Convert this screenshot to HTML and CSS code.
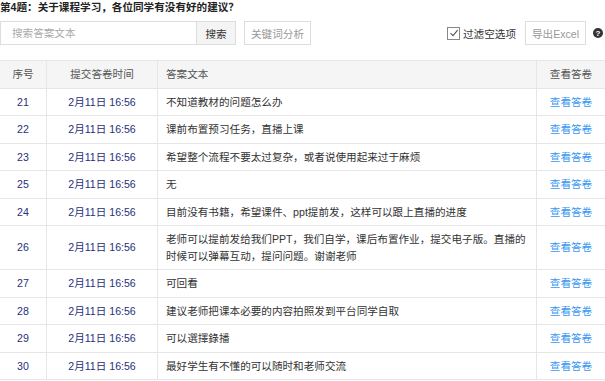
FILE: index.html
```html
<!DOCTYPE html>
<html lang="zh-CN">
<head>
  <meta charset="UTF-8">
  <meta name="viewport" content="width=device-width, initial-scale=1.0">
  <title>答案文本</title>
  <link rel="stylesheet" href="styles.css">
</head>
<body>
  <h1 class="question">第4题：关于课程学习，各位同学有没有好的建议？</h1>

  <div class="toolbar">
    <div class="search">
      <input type="text" class="search-input" placeholder="搜索答案文本">
      <button class="search-button">搜索</button>
    </div>
    <button class="plain-button keyword-button">关键词分析</button>

    <label class="filter">
      <span class="checkbox">
        <svg width="10" height="10" viewBox="0 0 10 10"><path d="M1.5 5.2 L4 7.6 L8.6 2.2" fill="none" stroke="#555" stroke-width="1.1"/></svg>
      </span>
      过滤空选项
    </label>
    <button class="plain-button export-button">导出Excel</button>
    <span class="help">?</span>
  </div>

  <table class="answers">
    <thead>
      <tr>
        <th class="col-no">序号</th>
        <th class="col-time">提交答卷时间</th>
        <th class="col-text">答案文本</th>
        <th class="col-link">查看答卷</th>
      </tr>
    </thead>
    <tbody>
      <tr><td class="col-no">21</td><td class="col-time">2月11日 16:56</td><td class="col-text">不知道教材的问题怎么办</td><td class="col-link"><a href="#">查看答卷</a></td></tr>
      <tr><td class="col-no">22</td><td class="col-time">2月11日 16:56</td><td class="col-text">课前布置预习任务，直播上课</td><td class="col-link"><a href="#">查看答卷</a></td></tr>
      <tr><td class="col-no">23</td><td class="col-time">2月11日 16:56</td><td class="col-text">希望整个流程不要太过复杂，或者说使用起来过于麻烦</td><td class="col-link"><a href="#">查看答卷</a></td></tr>
      <tr><td class="col-no">25</td><td class="col-time">2月11日 16:56</td><td class="col-text">无</td><td class="col-link"><a href="#">查看答卷</a></td></tr>
      <tr><td class="col-no">24</td><td class="col-time">2月11日 16:56</td><td class="col-text">目前没有书籍，希望课件、ppt提前发，这样可以跟上直播的进度</td><td class="col-link"><a href="#">查看答卷</a></td></tr>
      <tr><td class="col-no">26</td><td class="col-time">2月11日 16:56</td><td class="col-text">老师可以提前发给我们PPT，我们自学，课后布置作业，提交电子版。直播的<br>时候可以弹幕互动，提问问题。谢谢老师</td><td class="col-link"><a href="#">查看答卷</a></td></tr>
      <tr><td class="col-no">27</td><td class="col-time">2月11日 16:56</td><td class="col-text">可回看</td><td class="col-link"><a href="#">查看答卷</a></td></tr>
      <tr><td class="col-no">28</td><td class="col-time">2月11日 16:56</td><td class="col-text">建议老师把课本必要的内容拍照发到平台同学自取</td><td class="col-link"><a href="#">查看答卷</a></td></tr>
      <tr><td class="col-no">29</td><td class="col-time">2月11日 16:56</td><td class="col-text">可以選擇錄播</td><td class="col-link"><a href="#">查看答卷</a></td></tr>
      <tr><td class="col-no">30</td><td class="col-time">2月11日 16:56</td><td class="col-text">最好学生有不懂的可以随时和老师交流</td><td class="col-link"><a href="#">查看答卷</a></td></tr>
    </tbody>
  </table>
</body>
</html>
```

FILE: styles.css
```css
body {
  margin: 0;
  font-family: "Liberation Sans", "Noto Sans CJK SC", sans-serif;
  font-size: 10.6px;
  color: #333;
  background: #fff;
  overflow: hidden;
}
.question {
  margin: 0;
  font-size: 10.6px;
  line-height: 14px;
  font-weight: bold;
  color: #222;
}
.toolbar {
  display: flex;
  align-items: center;
  height: 24px;
  margin-top: 7px;
}
.search {
  display: flex;
}
.search-input {
  width: 197px;
  height: 24px;
  box-sizing: border-box;
  margin: 0;
  padding: 0 11px;
  border: 1px solid #ddd;
  font: inherit;
  color: #333;
  outline: none;
}
.search-input::placeholder {
  color: #aaa;
}
.search-button {
  height: 24px;
  width: 40px;
  margin: 0;
  margin-left: -1px;
  border: 1px solid #ddd;
  background: #f4f4f4;
  font: inherit;
  color: #333;
  padding: 0;
}
.plain-button {
  height: 24px;
  margin: 0;
  border: 1px solid #ddd;
  background: #fff;
  font: inherit;
  color: #999;
  padding: 0;
  white-space: nowrap;
}
.keyword-button {
  margin-left: 8px;
  width: 67px;
}
.filter {
  display: flex;
  align-items: center;
  margin-left: auto;
  gap: 3px;
  color: #333;
  white-space: nowrap;
}
.checkbox {
  display: flex;
  align-items: center;
  justify-content: center;
  width: 11px;
  height: 11px;
  border: 1px solid #888;
}
.export-button {
  margin-left: 9px;
  width: 61px;
}
.help {
  display: flex;
  align-items: center;
  justify-content: center;
  width: 10px;
  height: 10px;
  margin: 0 2px 0 7px;
  border-radius: 50%;
  background: #333;
  color: #fff;
  font-size: 8px;
  font-weight: bold;
}
.answers {
  width: 605px;
  margin-top: 15px;
  border-collapse: collapse;
  table-layout: fixed;
}
.answers th,
.answers td {
  padding: 5px 8px;
  line-height: 16.5px;
  border-bottom: 1px solid #e6e6e6;
  border-left: 1px solid #e6e6e6;
  font-weight: normal;
}
.answers th:first-child,
.answers td:first-child {
  border-left: none;
}
.answers thead th {
  height: 16px;
  background: #f5f5f6;
  color: #555;
  border-top: 1px solid #e6e6e6;
}
.col-no {
  width: 30px;
  text-align: center;
  color: #28307a;
}
.col-time {
  width: 94px;
  text-align: center;
  color: #28307a;
}
.col-text {
  text-align: left;
  color: #333;
}
.col-link {
  width: 52px;
  text-align: center;
}
.col-link a {
  color: #3a97f2;
  text-decoration: none;
}
```
